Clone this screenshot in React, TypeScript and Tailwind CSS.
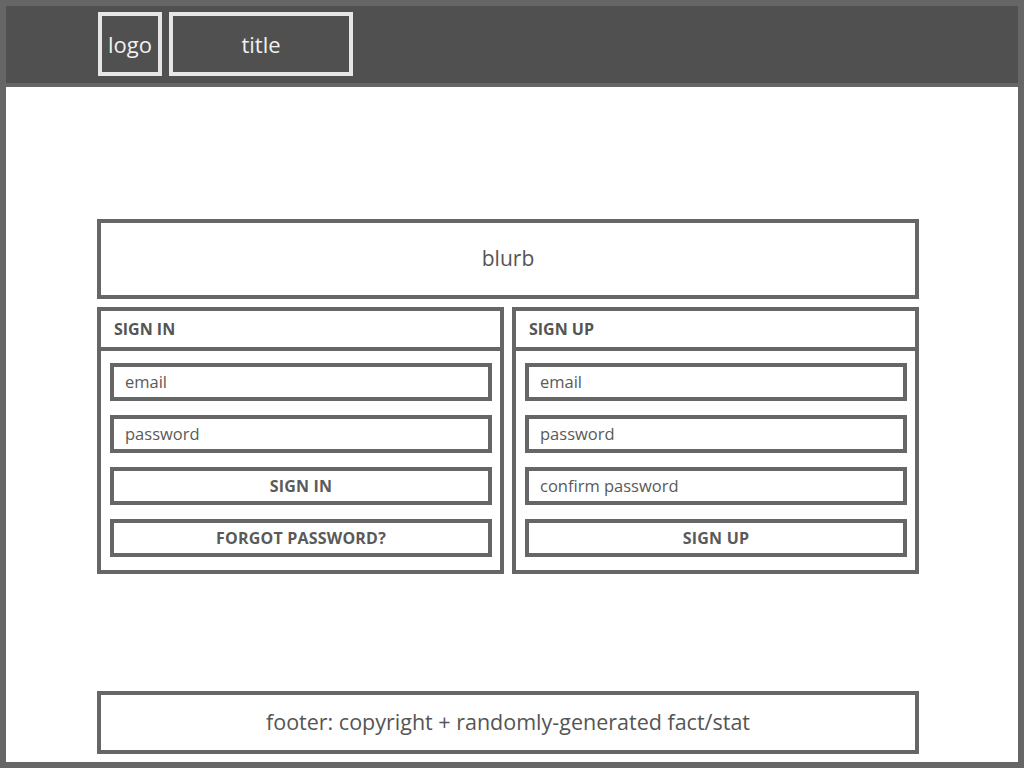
const inputBox =
  "h-[38px] border-4 border-[#666] bg-white flex items-center pl-[11px] text-[16.5px] text-[#5a5a5a]";
const buttonBox =
  "h-[38px] border-4 border-[#666] bg-white flex items-center justify-center text-[16px] font-bold tracking-[0.2px] text-[#5a5a5a]";

function Panel({ title, children }: { title: string; children: React.ReactNode }) {
  return (
    <div className="flex-1 border-4 border-[#666] flex flex-col">
      <div className="h-[40px] shrink-0 border-b-4 border-[#666] flex items-center pl-[13px] text-[16px] font-bold text-[#555]">
        {title}
      </div>
      <div className="flex flex-col gap-[14px] pt-[12px] pl-[9px] pr-[8px]">{children}</div>
    </div>
  );
}

export default function App() {
  return (
    <div
      className="h-[768px] w-[1024px] border-[6px] border-[#666] flex flex-col bg-white"
      style={{ fontFamily: '"Open Sans", "Noto Sans", sans-serif' }}
    >
      <header className="h-[81px] shrink-0 bg-[#505050] border-b-4 border-[#666] flex items-start gap-[7px] pl-[92px] pt-[6px]">
        <div className="w-[64px] h-[64px] border-4 border-[#e6e6e6] flex items-center justify-center text-[22px] text-[#f0f0f0]">
          logo
        </div>
        <div className="w-[184px] h-[64px] border-4 border-[#e6e6e6] flex items-center justify-center text-[22px] text-[#f0f0f0]">
          title
        </div>
      </header>

      <main className="flex-1 flex flex-col pl-[91px]">
        <div className="w-[822px] flex flex-col gap-[8px] mt-[132px]">
          <div className="h-[80px] border-4 border-[#666] flex items-center justify-center pb-[1px] text-[21px] text-[#555]">
            blurb
          </div>
          <div className="flex gap-[8px] h-[267px]">
            <Panel title="SIGN IN">
              <div className={inputBox}>email</div>
              <div className={inputBox}>password</div>
              <div className={buttonBox}>SIGN IN</div>
              <div className={buttonBox}>FORGOT PASSWORD?</div>
            </Panel>
            <Panel title="SIGN UP">
              <div className={inputBox}>email</div>
              <div className={inputBox}>password</div>
              <div className={inputBox}>confirm password</div>
              <div className={buttonBox}>SIGN UP</div>
            </Panel>
          </div>
        </div>
        <div className="flex-1" />
        <footer className="w-[822px] h-[63px] mb-[8px] border-4 border-[#666] flex items-center justify-center text-[21.5px] text-[#555]">
          footer: copyright + randomly-generated fact/stat
        </footer>
      </main>
    </div>
  );
}
